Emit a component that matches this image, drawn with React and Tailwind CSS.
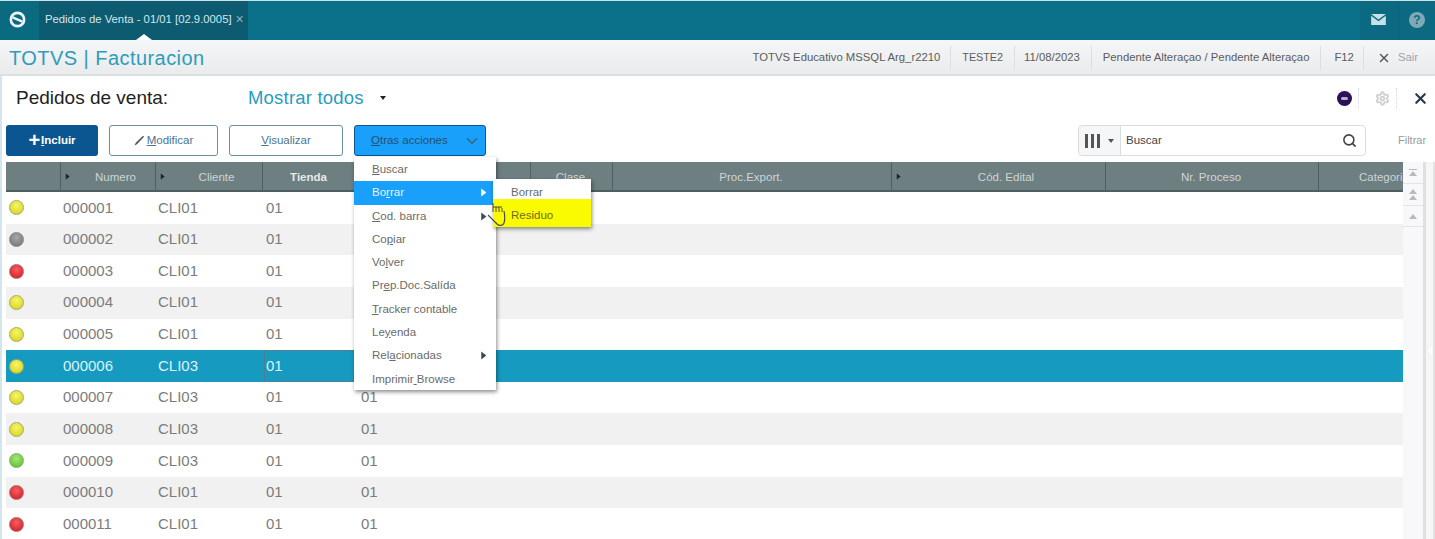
import { ChevronDown, Search, Settings, X } from 'lucide-react';

const rows = [
  { id: '000001', cli: 'CLI01', dot: 'yellow' },
  { id: '000002', cli: 'CLI01', dot: 'gray' },
  { id: '000003', cli: 'CLI01', dot: 'red' },
  { id: '000004', cli: 'CLI01', dot: 'yellow' },
  { id: '000005', cli: 'CLI01', dot: 'yellow' },
  { id: '000006', cli: 'CLI03', dot: 'yellow', selected: true },
  { id: '000007', cli: 'CLI03', dot: 'yellow' },
  { id: '000008', cli: 'CLI03', dot: 'yellow' },
  { id: '000009', cli: 'CLI03', dot: 'green' },
  { id: '000010', cli: 'CLI01', dot: 'red' },
  { id: '000011', cli: 'CLI01', dot: 'red' },
];

const dotClass = {
  yellow: 'bg-[radial-gradient(circle_at_50%_35%,#f6f56a,#dcdc2c_70%,#b5b53a)] border-[#a9a96a]',
  gray: 'bg-[radial-gradient(circle_at_50%_35%,#a8a8a8,#808080_70%,#666)] border-[#8a8a8a]',
  red: 'bg-[radial-gradient(circle_at_50%_35%,#f56060,#dc2a35_70%,#a82a30)] border-[#b06a6a]',
  green: 'bg-[radial-gradient(circle_at_50%_35%,#a5e87a,#6cc83c_70%,#5aa040)] border-[#86b070]',
};

const Caret = ({ className }) => (
  <svg viewBox="0 0 8 8" className={className} fill="currentColor">
    <path d="M2 0.5 L6.5 4 L2 7.5 Z" />
  </svg>
);

const HeadCell = ({ width, caret, bold, children }) => (
  <div
    className={`${width} relative h-full shrink-0 text-center border-r border-[#4f5f61] leading-[30px] whitespace-nowrap overflow-hidden ${caret ? 'pl-[15px]' : 'pr-[2px]'} ${bold ? 'font-bold text-[#e4e9e9]' : 'text-[#cdd5d5]'}`}
  >
    {caret && <Caret className="absolute left-[3px] top-[11px] w-[7px] h-[7px] text-[#1c2526]" />}
    {children}
  </div>
);

const MenuItem = ({ active, arrow, children }) => (
  <div
    className={`relative h-[23.3px] pl-[18px] leading-[23px] ${active ? 'bg-[#18a0fb] text-[#e6f3fb]' : 'text-[#6b6b6b]'}`}
  >
    {children}
    {arrow && (
      <Caret className={`absolute right-[8px] top-[7px] w-[9px] h-[9px] ${active ? 'text-white' : 'text-[#3c4a55]'}`} />
    )}
  </div>
);

const Btn = ({ width, className = '', children }) => (
  <button
    className={`${width} h-[31px] flex items-center justify-center rounded-[3px] text-[11.5px] ${className}`}
  >
    {children}
  </button>
);

const StatusItem = ({ children, className = '' }) => (
  <div className={`px-[11px] h-[24px] flex items-center border-l border-[#dcdfe0] whitespace-nowrap ${className}`}>
    {children}
  </div>
);

export default function App() {
  return (
    <div className="relative w-[1435px] h-[539px] overflow-hidden bg-white font-['Liberation_Sans',Arial,sans-serif]">
      {/* top bar */}
      <div className="h-[40px] flex border-t border-[#cfe0e4] bg-[#0b7089]">
        <div className="w-[39px] flex items-center justify-center pr-[4px] pb-[2px] bg-[#0a6a80]">
          <svg viewBox="0 0 20 20" className="w-[19px] h-[19px]">
            <circle cx="10" cy="10" r="7" fill="none" stroke="#eef6f8" strokeWidth="2.8" />
            <path d="M5 7.8 L15 12.2" stroke="#eef6f8" strokeWidth="2.4" />
          </svg>
        </div>
        <div className="relative w-[209px] bg-[#0d5b70] flex items-center pl-[6px] pb-[3px] text-[11.3px] text-[#d4e6ea] whitespace-nowrap">
          Pedidos de Venta - 01/01 [02.9.0005]
          <span className="ml-[4px] text-[#8fb4bf] text-[14px] leading-none">×</span>
          <div className="absolute left-[97px] bottom-0 w-0 h-0 border-x-[8px] border-x-transparent border-b-[6px] border-b-white" />
        </div>
        <div className="flex-1" />
        <div className="w-[38px] flex items-center justify-center pb-[2px] pr-[2px] bg-[#0b6a82]">
          <svg viewBox="0 0 16 12" className="w-[15px] h-[11px]">
            <path d="M0 0 H16 L8 6 Z" fill="#c9e0e6" />
            <path d="M0 2 L8 8 L16 2 V12 H0 Z" fill="#c9e0e6" />
          </svg>
        </div>
        <div className="w-[37px] flex items-center justify-center pb-[2px] bg-[#0b6a82] border-l border-[#0a6179]">
          <div className="w-[16px] h-[16px] rounded-full bg-[#7fa9b7] text-[#0b6a82] text-[12px] font-bold leading-[16px] text-center">?</div>
        </div>
      </div>

      {/* module bar */}
      <div className="h-[36px] flex items-center bg-gradient-to-b from-[#f5f6f7] to-[#e9ebec] border-b-2 border-[#dcdfe0]">
        <div className="pl-[9px] pt-[1px] text-[20px] tracking-[0.45px] text-[#2f9cbd] whitespace-nowrap">TOTVS | Facturacion</div>
        <div className="ml-auto flex items-center text-[11.3px] text-[#5c5c5c] pr-[6px] pt-[1px]">
          <div className="pr-[10px] whitespace-nowrap">TOTVS Educativo MSSQL Arg_r2210</div>
          <StatusItem className="text-[10.8px]">TESTE2</StatusItem>
          <StatusItem className="!pl-[9px]">11/08/2023</StatusItem>
          <StatusItem>Pendente Alteraçao / Pendente Alteraçao</StatusItem>
          <StatusItem className="!pl-[13px] !pr-[9px]">F12</StatusItem>
          <StatusItem className="!pl-[13px] !pr-[11px] gap-[7px] text-[#a0a4a6]">
            <X className="w-[14px] h-[14px] text-[#555]" strokeWidth={2.5} />
            Sair
          </StatusItem>
        </div>
      </div>

      {/* main */}
      <div className="h-[463px] border-l-2 border-[#d3e6ef] pl-[4px] flex flex-col">
        {/* title row */}
        <div className="h-[49px] flex items-center pb-[5px] shrink-0">
          <div className="w-[242px] pl-[10px] text-[19px] text-[#222]">Pedidos de venta:</div>
          <div className="text-[18.5px] tracking-[0.2px] text-[#2a9cbd]">Mostrar todos</div>
          <div className="ml-[16px] w-0 h-0 border-x-[3.5px] border-x-transparent border-t-[4px] border-t-[#222]" />
          <div className="ml-auto flex items-center pr-[6px]">
            <div className="w-[15px] h-[15px] rounded-full bg-[#2b1158] flex items-center justify-center mr-[6px]">
              <div className="w-[7px] h-[3px] rounded-full bg-[#b9b0cc]" />
            </div>
            <div className="h-[20px] border-l border-dotted border-[#d5d5d5] pl-[16px] pr-[6px] flex items-center">
              <Settings className="w-[15px] h-[15px] text-[#d0d0d0]" strokeWidth={3} />
            </div>
            <div className="h-[20px] border-l border-dotted border-[#d5d5d5] pl-[15px] flex items-center">
              <X className="w-[17px] h-[17px] text-[#26384a]" strokeWidth={3} />
            </div>
          </div>
        </div>

        {/* toolbar */}
        <div className="h-[31px] flex items-center shrink-0">
          <Btn width="w-[92px]" className="bg-[#0b5690] text-white font-bold">
            <span className="text-[20px] leading-none font-bold mr-[1px] -mt-[2px]">+</span>
            <span><u>I</u>ncluir</span>
          </Btn>
          <Btn width="w-[109px] ml-[11px]" className="bg-white border-[1.5px] border-[#6c8ea5] text-[#4a7490]">
            <svg viewBox="0 0 12 12" className="w-[11px] h-[11px] mr-[2px]">
              <path d="M0.5 11.5 L2 8.5 L9.8 0.8 L11 2 L3.2 10 Z" fill="#555" />
            </svg>
            <span><u>M</u>odificar</span>
          </Btn>
          <Btn width="w-[114px] ml-[11px]" className="bg-white border-[1.5px] border-[#6c8ea5] text-[#4a7490]">
            <span><u>V</u>isualizar</span>
          </Btn>
          <Btn width="w-[132px] ml-[11px] relative" className="bg-[#18a0fb] border border-[#0b5690] text-[#24506e]">
            <span className="absolute left-[16px]"><u>O</u>tras acciones</span>
            <ChevronDown className="absolute right-[4px] w-[18px] h-[18px] text-[#3f6277]" strokeWidth={2} />
          </Btn>
          <div className="ml-[592px] w-[288px] h-[31px] flex rounded-[4px] border border-[#d9dde0] bg-white">
            <div className="w-[42px] flex items-center justify-center gap-[8px] border-r border-[#d9dde0] bg-[#f5f6f7] rounded-l-[4px]">
              <div className="flex gap-[3px]">
                <span className="w-[3px] h-[14px] bg-[#555]" />
                <span className="w-[3px] h-[14px] bg-[#555]" />
                <span className="w-[3px] h-[14px] bg-[#555]" />
              </div>
              <div className="w-0 h-0 border-x-[3.5px] border-x-transparent border-t-[4px] border-t-[#555]" />
            </div>
            <div className="flex-1 pl-[5px] flex items-center text-[11.5px] text-[#444]">Buscar</div>
            <Search className="w-[15px] h-[15px] text-[#444] self-center mr-[8px]" strokeWidth={2.5} />
          </div>
          <div className="ml-[32px] text-[11px] text-[#9a9a9a]">Filtrar</div>
        </div>

        {/* grid */}
        <div className="flex-1 flex mt-[6px] min-h-0">
          <div className="w-[1397px] shrink-0 text-[11.5px]">
            <div className="h-[28px] flex bg-[#6e7f81] border-b-2 border-[#4f5f61] box-content text-[11.5px]">
              <HeadCell width="w-[55px]" />
              <HeadCell width="w-[95px]" caret>Numero</HeadCell>
              <HeadCell width="w-[107px]" caret>Cliente</HeadCell>
              <HeadCell width="w-[94px]" bold>Tienda</HeadCell>
              <HeadCell width="w-[174px]" />
              <HeadCell width="w-[82px]">Clase</HeadCell>
              <HeadCell width="w-[279px]">Proc.Export.</HeadCell>
              <HeadCell width="w-[214px]" caret>Cód. Edital</HeadCell>
              <HeadCell width="w-[213px]">Nr. Proceso</HeadCell>
              <div className="flex-1 pl-[40px] leading-[30px] text-[#cdd5d5] overflow-hidden whitespace-nowrap">Categori</div>
            </div>
            {rows.map((r, i) => (
              <div
                key={r.id}
                className={`h-[31.65px] flex items-center text-[15px] ${
                  r.selected ? 'bg-[#169ac0] text-[#dff2f8]' : i % 2 === 1 ? 'bg-[#f1f1f1] text-[#7c7c7c]' : 'bg-white text-[#7c7c7c]'
                }`}
              >
                <div className="w-[57px] pl-[3px] shrink-0">
                  <div className={`w-[15px] h-[15px] rounded-full border ${dotClass[r.dot]}`} />
                </div>
                <div className="w-[95px] shrink-0">{r.id}</div>
                <div className="w-[108px] shrink-0">{r.cli}</div>
                <div className={`w-[95px] shrink-0 h-full flex items-center ${r.selected ? 'border border-[#4d7f93] pl-[1px] -ml-[2px] mr-[2px]' : ''}`}>01</div>
                <div>01</div>
              </div>
            ))}
          </div>

          {/* scroll buttons */}
          <div className="w-[20px] shrink-0 bg-[#f8f8fb] flex flex-col items-center">
            <div className="h-[22px] w-full flex flex-col items-center justify-center border-b border-[#e2e4e4]">
              <div className="w-[8px] h-[1px] bg-[#b4bcbc] mb-[1px]" />
              <div className="w-0 h-0 border-x-[4px] border-x-transparent border-b-[5px] border-b-[#b4bcbc]" />
            </div>
            <div className="h-[22px] w-full flex flex-col items-center justify-center border-b border-[#e2e4e4]">
              <div className="w-0 h-0 border-x-[4px] border-x-transparent border-b-[5px] border-b-[#b4bcbc]" />
              <div className="w-0 h-0 border-x-[4px] border-x-transparent border-b-[5px] border-b-[#b4bcbc] mt-[1px]" />
            </div>
            <div className="h-[21px] w-full flex items-center justify-center border-b border-[#e2e4e4]">
              <div className="w-0 h-0 border-x-[4px] border-x-transparent border-b-[5px] border-b-[#b4bcbc]" />
            </div>
          </div>
          <div className="flex-1 flex items-center justify-center border-l-[3px] border-r-[2px] border-l-[#e0e0e0] border-r-[#e4e4e4] bg-[#f6f6f6]">
            <div className="w-0 h-0 border-y-[4px] border-y-transparent border-r-[4px] border-r-white" />
          </div>
        </div>
      </div>

      {/* dropdown */}
      <div className="absolute left-[354px] top-[157px] w-[142px] h-[233px] bg-white pt-[1px] text-[11.5px] shadow-[1px_2px_4px_rgba(0,0,0,0.45)]">
        <MenuItem><u>B</u>uscar</MenuItem>
        <MenuItem active arrow>Bo<u>r</u>rar</MenuItem>
        <MenuItem arrow><u>C</u>od. barra</MenuItem>
        <MenuItem>Co<u>p</u>iar</MenuItem>
        <MenuItem>Vo<u>l</u>ver</MenuItem>
        <MenuItem>Pr<u>e</u>p.Doc.Salída</MenuItem>
        <MenuItem><u>T</u>racker contable</MenuItem>
        <MenuItem>Le<u>y</u>enda</MenuItem>
        <MenuItem arrow>Rel<u>a</u>cionadas</MenuItem>
        <MenuItem>Imprimir<u> </u>Browse</MenuItem>
      </div>

      {/* submenu */}
      <div className="absolute left-[493px] top-[179px] w-[98px] h-[48px] bg-white text-[11.5px] text-[#6b6b6b] shadow-[1px_2px_4px_rgba(0,0,0,0.45)]">
        <div className="h-[20px] pl-[18px] leading-[27px]">Borrar</div>
        <div className="h-[28px] pl-[18px] leading-[33px] bg-[#fbfb00] text-[#6b6b20]">Residuo</div>
      </div>

      {/* mouse cursor */}
      <svg viewBox="0 0 26 28" className="absolute left-[484px] top-[202px] w-[26px] h-[28px]" fill="none">
        <path d="M4 13 L13 22 C15 24 19 24 20 21 C21 18 21 14 20 9" stroke="#4a4a4a" strokeWidth="1.2" />
        <path d="M9 1 V10 M12 5 V10 M15 5 V10 M18 6 V10 M9 5 H18" stroke="#4a4a3a" strokeWidth="1" />
      </svg>
    </div>
  );
}
